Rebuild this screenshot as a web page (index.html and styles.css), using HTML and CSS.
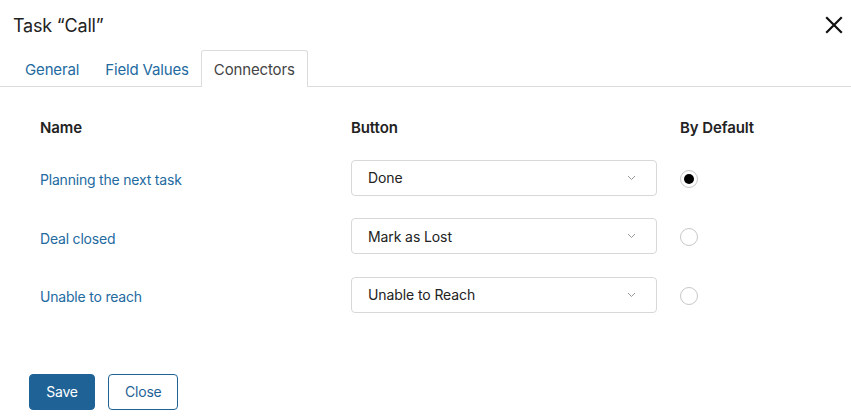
FILE: index.html
```html
<!DOCTYPE html>
<html lang="en">
<head>
<meta charset="utf-8">
<link rel="stylesheet" href="styles.css">
</head>
<body>
<div class="dialog">
  <div class="header">
    <h1 class="title">Task “Call”</h1>
    <button class="close-x" aria-label="Close">
      <svg width="18" height="18" viewBox="0 0 18 18"><path d="M2 2L16 16M16 2L2 16" stroke="#111" stroke-width="2.2" stroke-linecap="square"/></svg>
    </button>
  </div>
  <div class="tabs">
    <a class="tab">General</a>
    <a class="tab">Field Values</a>
    <a class="tab active">Connectors</a>
  </div>
  <div class="content">
    <div class="grid">
      <div class="th">Name</div>
      <div class="th">Button</div>
      <div class="th">By Default</div>

      <a class="name">Planning the next task</a>
      <div class="select"><span>Done</span><svg class="chev" width="9" height="6" viewBox="0 0 9 6"><path d="M1 1L4.5 4.5L8 1" fill="none" stroke="#999" stroke-width="1"/></svg></div>
      <div class="radio-cell"><span class="radio checked"></span></div>

      <a class="name">Deal closed</a>
      <div class="select"><span>Mark as Lost</span><svg class="chev" width="9" height="6" viewBox="0 0 9 6"><path d="M1 1L4.5 4.5L8 1" fill="none" stroke="#999" stroke-width="1"/></svg></div>
      <div class="radio-cell"><span class="radio"></span></div>

      <a class="name">Unable to reach</a>
      <div class="select"><span>Unable to Reach</span><svg class="chev" width="9" height="6" viewBox="0 0 9 6"><path d="M1 1L4.5 4.5L8 1" fill="none" stroke="#999" stroke-width="1"/></svg></div>
      <div class="radio-cell"><span class="radio"></span></div>
    </div>
  </div>
  <div class="footer">
    <button class="btn primary">Save</button>
    <button class="btn secondary">Close</button>
  </div>
</div>
</body>
</html>
```
FILE: styles.css
```css
* { box-sizing: border-box; }
html, body { margin: 0; padding: 0; background: #fff; }
body {
  font-family: Inter, "Noto Sans", sans-serif;
  font-size: 14px;
  color: #222;
  width: 851px;
  height: 416px;
  overflow: hidden;
}
.header {
  display: flex;
  align-items: center;
  justify-content: space-between;
  height: 50px;
  padding: 0 8px 0 13px;
}
.title {
  margin: 0;
  font-size: 18px;
  font-weight: 400;
  color: #222;
  letter-spacing: -0.2px;
}
.close-x {
  border: 0;
  background: none;
  padding: 0;
  width: 18px;
  height: 18px;
  display: flex;
}
.tabs {
  display: flex;
  padding-left: 12px;
  border-bottom: 1px solid #dcdcdc;
  height: 37px;
}
.tab {
  display: flex;
  align-items: center;
  padding: 0 12px;
  height: 37px;
  color: #236a9f;
  font-size: 15px;
  border: 1px solid transparent;
  border-bottom: 0;
  border-radius: 3px 3px 0 0;
  letter-spacing: -0.15px;
}
.tab.active {
  color: #444;
  border-color: #dcdcdc;
  background: #fff;
  margin-bottom: -1px;
  margin-left: -1px;
  height: 37px;
}
.content {
  padding: 29px 40px 0 40px;
}
.grid {
  display: grid;
  grid-template-columns: 311px 329px 1fr;
  grid-template-rows: 21px repeat(3, 36px);
  row-gap: 22.5px;
  align-items: center;
}
.th {
  font-weight: 600;
  font-size: 15px;
  color: #222;
  letter-spacing: -0.1px;
  padding-top: 1px;
}
.name {
  color: #236a9f;
  font-size: 14px;
  letter-spacing: -0.2px;
  padding-top: 4px;
}
.select {
  width: 306px;
  height: 36px;
  border: 1px solid #d8d8d8;
  border-radius: 4px;
  display: flex;
  align-items: center;
  justify-content: space-between;
  padding: 0 20px 0 16px;
  font-size: 14px;
  color: #222;
  letter-spacing: -0.1px;
}
.chev { display: block; }
.radio-cell { display: flex; align-items: center; padding-top: 2px; }
.radio {
  width: 18px;
  height: 18px;
  border-radius: 50%;
  border: 1px solid #c8c8c8;
  background: #fff;
  display: flex;
  align-items: center;
  justify-content: center;
}
.radio.checked::after {
  content: "";
  width: 10px;
  height: 10px;
  border-radius: 50%;
  background: #000;
}
.footer {
  display: flex;
  gap: 13px;
  padding: 0 0 0 29px;
  margin-top: 61px;
}
.btn {
  height: 36px;
  border-radius: 4px;
  font-family: Inter, "Noto Sans", sans-serif;
  font-size: 14px;
  padding: 0 16px;
  letter-spacing: -0.2px;
}
.btn.primary {
  width: 66px;
  background: #1f6396;
  border: 1px solid #1f6396;
  color: #fff;
}
.btn.secondary {
  width: 70px;
  background: #fff;
  border: 1px solid #1f6396;
  color: #1f6396;
}
```
